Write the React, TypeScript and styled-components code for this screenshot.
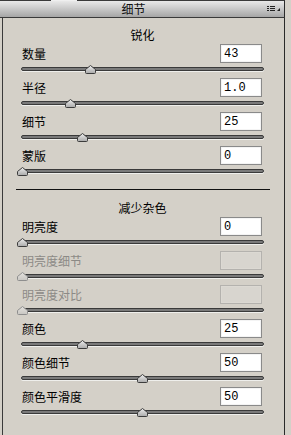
import React from 'react';
import styled, { createGlobalStyle } from 'styled-components';

const GlobalStyle = createGlobalStyle`
	html, body {
		margin: 0;
		padding: 0;
		background: #d4d0c8;
	}
	body {
		font-family: 'Noto Sans CJK SC', 'Liberation Sans', sans-serif;
		font-size: 12px;
		color: #000;
	}
`;

type Param = {
	label: string;
	value: string;
	frac: number;
	disabled?: boolean;
};

const sharpen: Param[] = [
	{ label: '数量', value: '43', frac: 43 / 150 },
	{ label: '半径', value: '1.0', frac: 0.2 },
	{ label: '细节', value: '25', frac: 0.25 },
	{ label: '蒙版', value: '0', frac: 0 },
];

const noise: Param[] = [
	{ label: '明亮度', value: '0', frac: 0 },
	{ label: '明亮度细节', value: '', frac: 0, disabled: true },
	{ label: '明亮度对比', value: '', frac: 0, disabled: true },
	{ label: '颜色', value: '25', frac: 0.25 },
	{ label: '颜色细节', value: '50', frac: 0.5 },
	{ label: '颜色平滑度', value: '50', frac: 0.5 },
];

const MenuIcon: React.FC = () => (
	<svg width="13" height="6" viewBox="0 0 13 6">
		<rect x="0" y="0" width="2" height="1" fill="#222" />
		<rect x="3" y="0" width="5" height="1" fill="#222" />
		<rect x="0" y="2" width="2" height="1" fill="#222" />
		<rect x="3" y="2" width="5" height="1" fill="#222" />
		<rect x="0" y="4" width="2" height="1" fill="#222" />
		<rect x="3" y="4" width="5" height="1" fill="#222" />
		<polygon points="13,2 13,5 10,5" fill="#222" />
	</svg>
);

const Thumb: React.FC<{ disabled?: boolean }> = ({ disabled }) => (
	<svg width="11" height="10" viewBox="0 0 11 10">
		<defs>
			<linearGradient id={disabled ? 'thumbOff' : 'thumbOn'} x1="0" y1="0" x2="0" y2="1">
				<stop offset="0" stopColor={disabled ? '#e4e2de' : '#eeeeee'} />
				<stop offset="1" stopColor={disabled ? '#c8c6c2' : '#a9a9a9'} />
			</linearGradient>
		</defs>
		<path
			d="M5.5 0.5 L10.5 4.5 L10.5 7.5 Q10.5 8.5 9.5 8.5 L1.5 8.5 Q0.5 8.5 0.5 7.5 L0.5 4.5 Z"
			fill={`url(#${disabled ? 'thumbOff' : 'thumbOn'})`}
			stroke={disabled ? '#8e8e8e' : '#3c3c3c'}
			strokeWidth="1"
		/>
	</svg>
);

const Slider: React.FC<{ frac: number; disabled?: boolean }> = ({ frac, disabled }) => (
	<SliderArea>
		<Track />
		<ThumbHolder style={{ left: `${1 + frac * 240 - 5.5}px` }}>
			<Thumb disabled={disabled} />
		</ThumbHolder>
	</SliderArea>
);

const ParamRow: React.FC<{ p: Param }> = ({ p }) => (
	<Row>
		<LabelLine>
			<Label $disabled={p.disabled}>{p.label}</Label>
			<ValueBox $disabled={p.disabled} value={p.value} readOnly />
		</LabelLine>
		<Slider frac={p.frac} disabled={p.disabled} />
	</Row>
);

const App: React.FC = () => {
	return (
		<>
			<GlobalStyle />
			<Panel>
				<Header>
					<HeaderTitle>细节</HeaderTitle>
					<MenuIcon />
				</Header>
				<Body>
					<SectionTitle>锐化</SectionTitle>
					{sharpen.map((p) => (
						<ParamRow key={p.label} p={p} />
					))}
					<Divider />
					<SectionTitle>减少杂色</SectionTitle>
					{noise.map((p) => (
						<ParamRow key={p.label} p={p} />
					))}
				</Body>
			</Panel>
		</>
	);
};

const Panel = styled.div`
	width: 285px;
	min-height: 100vh;
	display: flex;
	flex-direction: column;
`;

const Header = styled.div`
	position: relative;
	height: 16px;
	display: flex;
	align-items: center;
	padding-right: 4px;
	border-top: 1px solid #3a3a3a;
	border-bottom: 1px solid #3a3a3a;
	border-right: 1px solid #2a2a2a;
	background: linear-gradient(#e9e9e9, #a6a6a6);
	&::before {
		content: '';
		position: absolute;
		top: -1px;
		left: 51px;
		width: 26px;
		height: 1px;
		background: #efefef;
	}
`;

const HeaderTitle = styled.div`
	flex: 1;
	text-align: center;
	font-size: 12px;
	line-height: 16px;
	color: #111;
`;

const Body = styled.div`
	flex: 1;
	margin-left: 2px;
	border-left: 1px solid #3a3a3a;
	border-right: 1px solid #2a2a2a;
	padding: 7px 20px 0 18px;
	display: flex;
	flex-direction: column;
`;

const SectionTitle = styled.div`
	height: 19px;
	line-height: 19px;
	text-align: center;
	font-size: 12px;
	color: #000;
`;

const Divider = styled.div`
	height: 1px;
	background: #111;
	margin: 9px -6px 8px -5px;
`;

const Row = styled.div`
	display: flex;
	flex-direction: column;
`;

const LabelLine = styled.div`
	height: 19px;
	display: flex;
	align-items: center;
	justify-content: space-between;
`;

const Label = styled.span<{ $disabled?: boolean }>`
	padding-left: 1px;
	font-size: 12px;
	color: ${(p) => (p.$disabled ? '#8c8a86' : '#000')};
`;

const ValueBox = styled.input<{ $disabled?: boolean }>`
	box-sizing: border-box;
	width: 42px;
	height: 19px;
	margin: 0 2px 0 0;
	padding: 0 0 0 3px;
	border: 1px solid ${(p) => (p.$disabled ? '#b4b2ae' : '#8a8a8a')};
	box-shadow: inset 0 0 0 1px ${(p) => (p.$disabled ? '#dcd9d3' : '#f4f4f4')};
	background: ${(p) => (p.$disabled ? '#d8d5cf' : '#fff')};
	font-family: 'Liberation Mono', 'DejaVu Sans Mono', monospace;
	font-size: 12px;
	color: #000;
	outline: none;
`;

const SliderArea = styled.div`
	position: relative;
	height: 15px;
	width: 243px;
`;

const Track = styled.div`
	box-sizing: border-box;
	margin-top: 4px;
	height: 4px;
	border: 1px solid #3a3a3a;
	border-radius: 2px;
	background: #7a7a7a;
	box-shadow: 0 1px 0 #efefec;
`;

const ThumbHolder = styled.div`
	position: absolute;
	top: 2px;
	width: 11px;
	height: 10px;
	display: flex;
`;

export default App;
